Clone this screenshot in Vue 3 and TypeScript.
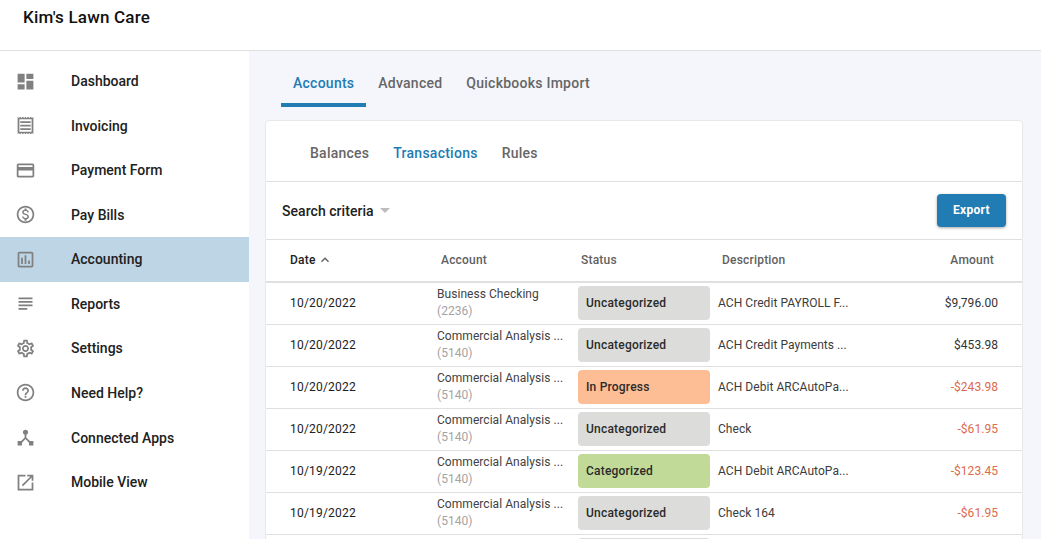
<script setup lang="ts">
interface Row {
  date: string
  account: string
  acctNo: string
  status: 'Uncategorized' | 'In Progress' | 'Categorized'
  description: string
  amount: string
}

const navItems = [
  { label: 'Dashboard', icon: 'M3 13h8V3H3v10zm0 8h8v-6H3v6zm10 0h8V11h-8v10zm0-18v6h8V3h-8z' },
  { label: 'Invoicing', icon: 'M19.5 3.5 18 2l-1.5 1.5L15 2l-1.5 1.5L12 2l-1.5 1.5L9 2 7.5 3.5 6 2 4.5 3.5 3 2v20l1.5-1.5L6 22l1.5-1.5L9 22l1.5-1.5L12 22l1.5-1.5L15 22l1.5-1.5L18 22l1.5-1.5L21 22V2l-1.5 1.5zM19 19.09H5V4.91h14v14.18zM6 15h12v2H6zm0-4h12v2H6zm0-4h12v2H6z' },
  { label: 'Payment Form', icon: 'M20 4H4c-1.11 0-1.99.89-1.99 2L2 18c0 1.11.89 2 2 2h16c1.11 0 2-.89 2-2V6c0-1.11-.89-2-2-2zm0 14H4v-6h16v6zm0-10H4V6h16v2z' },
  { label: 'Pay Bills', icon: 'M12 2C6.48 2 2 6.48 2 12s4.48 10 10 10 10-4.48 10-10S17.52 2 12 2zm0 18c-4.41 0-8-3.59-8-8s3.59-8 8-8 8 3.59 8 8-3.59 8-8 8zm.31-8.86c-1.77-.45-2.34-.94-2.34-1.67 0-.84.79-1.43 2.1-1.43 1.38 0 1.9.66 1.94 1.64h1.71c-.05-1.34-.87-2.57-2.49-2.97V5H10.9v1.69c-1.51.32-2.72 1.3-2.72 2.81 0 1.79 1.49 2.69 3.66 3.21 1.95.46 2.34 1.15 2.34 1.87 0 .53-.39 1.39-2.1 1.39-1.6 0-2.23-.72-2.32-1.64H8.04c.1 1.7 1.36 2.66 2.86 2.97V19h2.34v-1.67c1.52-.29 2.72-1.16 2.73-2.77-.01-2.2-1.9-2.96-3.66-3.42z' },
  { label: 'Accounting', icon: 'M19 3H5c-1.1 0-2 .9-2 2v14c0 1.1.9 2 2 2h14c1.1 0 2-.9 2-2V5c0-1.1-.9-2-2-2zm0 16H5V5h14v14zM7 10h2v7H7zm4-3h2v10h-2zm4 6h2v4h-2z', active: true },
  { label: 'Reports', icon: 'M14 17H4v2h10v-2zm6-8H4v2h16V9zM4 15h16v-2H4v2zM4 5v2h16V5H4z' },
  { label: 'Settings', icon: 'M19.43 12.98c.04-.32.07-.64.07-.98s-.03-.66-.07-.98l2.11-1.65c.19-.15.24-.42.12-.64l-2-3.46c-.12-.22-.39-.3-.61-.22l-2.49 1c-.52-.4-1.08-.73-1.69-.98l-.38-2.65C14.46 2.18 14.25 2 14 2h-4c-.25 0-.46.18-.49.42l-.38 2.65c-.61.25-1.17.59-1.69.98l-2.49-1c-.23-.09-.49 0-.61.22l-2 3.46c-.13.22-.07.49.12.64l2.11 1.65c-.04.32-.07.65-.07.98s.03.66.07.98l-2.11 1.65c-.19.15-.24.42-.12.64l2 3.46c.12.22.39.3.61.22l2.49-1c.52.4 1.08.73 1.69.98l.38 2.65c.03.24.24.42.49.42h4c.25 0 .46-.18.49-.42l.38-2.65c.61-.25 1.17-.59 1.69-.98l2.49 1c.23.09.49 0 .61-.22l2-3.46c.12-.22.07-.49-.12-.64l-2.11-1.65zm-1.98-1.71c.04.31.05.52.05.73 0 .21-.02.43-.05.73l-.14 1.13.89.7 1.08.84-.7 1.21-1.27-.51-1.04-.42-.9.68c-.43.32-.84.56-1.25.73l-1.06.43-.16 1.13-.2 1.35h-1.4l-.19-1.35-.16-1.13-1.06-.43c-.43-.18-.83-.41-1.23-.71l-.91-.7-1.06.43-1.27.51-.7-1.21 1.08-.84.89-.7-.14-1.13c-.03-.31-.05-.54-.05-.74s.02-.43.05-.73l.14-1.13-.89-.7-1.08-.84.7-1.21 1.27.51 1.04.42.9-.68c.43-.32.84-.56 1.25-.73l1.06-.43.16-1.13.2-1.35h1.39l.19 1.35.16 1.13 1.06.43c.43.18.83.41 1.23.71l.91.7 1.06-.43 1.27-.51.7 1.21-1.07.85-.89.7.14 1.13zM12 8c-2.21 0-4 1.79-4 4s1.79 4 4 4 4-1.79 4-4-1.79-4-4-4zm0 6c-1.1 0-2-.9-2-2s.9-2 2-2 2 .9 2 2-.9 2-2 2z' },
  { label: 'Need Help?', icon: 'M11 18h2v-2h-2v2zm1-16C6.48 2 2 6.48 2 12s4.48 10 10 10 10-4.48 10-10S17.52 2 12 2zm0 18c-4.41 0-8-3.59-8-8s3.59-8 8-8 8 3.59 8 8-3.59 8-8 8zm0-14c-2.21 0-4 1.79-4 4h2c0-1.1.9-2 2-2s2 .9 2 2c0 2-3 1.75-3 5h2c0-2.25 3-2.5 3-5 0-2.21-1.79-4-4-4z' },
  { label: 'Connected Apps', icon: 'M17 16l-4-4V8.82C14.16 8.4 15 7.3 15 6c0-1.66-1.34-3-3-3S9 4.34 9 6c0 1.3.84 2.4 2 2.82V12l-4 4H3v5h5v-3.05l4-4.2 4 4.2V21h5v-5h-4z' },
  { label: 'Mobile View', icon: 'M19 19H5V5h7V3H3v18h18v-9h-2v7zM14 3v2h3.59l-9.83 9.83 1.41 1.41L19 6.41V10h2V3h-7z' },
]

const rows: Row[] = [
  { date: '10/20/2022', account: 'Business Checking', acctNo: '(2236)', status: 'Uncategorized', description: 'ACH Credit PAYROLL F...', amount: '$9,796.00' },
  { date: '10/20/2022', account: 'Commercial Analysis ...', acctNo: '(5140)', status: 'Uncategorized', description: 'ACH Credit Payments ...', amount: '$453.98' },
  { date: '10/20/2022', account: 'Commercial Analysis ...', acctNo: '(5140)', status: 'In Progress', description: 'ACH Debit ARCAutoPa...', amount: '-$243.98' },
  { date: '10/20/2022', account: 'Commercial Analysis ...', acctNo: '(5140)', status: 'Uncategorized', description: 'Check', amount: '-$61.95' },
  { date: '10/19/2022', account: 'Commercial Analysis ...', acctNo: '(5140)', status: 'Categorized', description: 'ACH Debit ARCAutoPa...', amount: '-$123.45' },
  { date: '10/19/2022', account: 'Commercial Analysis ...', acctNo: '(5140)', status: 'Uncategorized', description: 'Check 164', amount: '-$61.95' },
]

function statusClass(status: Row['status']) {
  return 'status--' + status.toLowerCase().replace(' ', '-')
}
</script>

<template>
  <div class="page">
    <header class="topbar">Kim's Lawn Care</header>
    <div class="body">
      <nav class="sidebar">
        <a
          v-for="item in navItems"
          :key="item.label"
          class="nav-item"
          :class="{ 'nav-item--active': item.active }"
        >
          <svg class="nav-icon" viewBox="0 0 24 24" aria-hidden="true"><path :d="item.icon" /></svg>
          <span>{{ item.label }}</span>
        </a>
      </nav>
      <main class="main">
        <div class="tabs">
          <a class="tab tab--active">Accounts</a>
          <a class="tab">Advanced</a>
          <a class="tab">Quickbooks Import</a>
        </div>
        <section class="card">
          <div class="subtabs">
            <a class="subtab">Balances</a>
            <a class="subtab subtab--active">Transactions</a>
            <a class="subtab">Rules</a>
          </div>
          <div class="toolbar">
            <div class="criteria">
              Search criteria
              <span class="caret"></span>
            </div>
            <button class="export" type="button">Export</button>
          </div>
          <div class="row row--head">
            <div class="head-date">
              Date
              <svg class="sort" viewBox="0 0 24 24" aria-hidden="true"><path d="M7.41 15.41 12 10.83l4.59 4.58L18 14l-6-6-6 6z" /></svg>
            </div>
            <div class="head-account">Account</div>
            <div class="head-status">Status</div>
            <div class="head-desc">Description</div>
            <div class="head-amount">Amount</div>
          </div>
          <div v-for="(row, i) in rows" :key="i" class="row">
            <div class="date">{{ row.date }}</div>
            <div class="account">
              <div>{{ row.account }}</div>
              <div class="acct-no">{{ row.acctNo }}</div>
            </div>
            <div class="status" :class="statusClass(row.status)">{{ row.status }}</div>
            <div class="desc">{{ row.description }}</div>
            <div class="amount" :class="{ 'amount--neg': row.amount.startsWith('-') }">{{ row.amount }}</div>
          </div>
          <!-- next row is below the fold, only the top of its pill shows -->
          <div class="row">
            <div></div>
            <div></div>
            <div class="status status--uncategorized"></div>
          </div>
        </section>
      </main>
    </div>
  </div>
</template>

<style>
html,
body {
  height: 100%;
  overflow: hidden;
}
</style>

<style scoped>
.page {
  height: 539px;
  overflow: hidden;
  font-family: Roboto, "Liberation Sans", sans-serif;
  background: #fff;
  color: #1f1f1f;
}

.topbar {
  height: 50px;
  padding-left: 23px;
  border-bottom: 1px solid #e0e0e0;
  font-size: 17px;
  font-weight: 500;
  line-height: 35px;
  letter-spacing: 0.2px;
  color: #111;
}

.body {
  display: flex;
  height: 488px;
}

.sidebar {
  width: 249px;
  flex: none;
  padding-top: 7.9px;
  box-sizing: border-box;
  background: #fff;
}

.nav-item {
  display: flex;
  align-items: center;
  height: 44.55px;
  padding-left: 15px;
  font-size: 14px;
  font-weight: 500;
  color: #212121;
}

.nav-item--active {
  background: #bdd5e5;
}

.nav-icon {
  width: 21px;
  height: 21px;
  margin-right: 35px;
  fill: #808080;
  flex: none;
}

.main {
  flex: 1;
  min-width: 0;
  background: #f4f6fb;
  padding: 0 18px 0 16px;
}

.tabs {
  display: flex;
  height: 56px;
  margin-left: 16px;
}

.tab {
  display: flex;
  align-items: center;
  height: 56px;
  box-sizing: border-box;
  padding: 12px 12px 0;
  border-bottom: 4px solid transparent;
  font-size: 14px;
  font-weight: 500;
  letter-spacing: 0.25px;
  color: #666;
}

.tab--active {
  color: #217cb3;
  border-bottom-color: #217cb3;
}

.card {
  margin-top: 13px;
  background: #fff;
  border: 1px solid #e8e8e8;
  border-radius: 4px 4px 0 0;
}

.subtabs {
  display: flex;
  gap: 24px;
  align-items: center;
  height: 61px;
  padding-left: 44px;
  padding-top: 3px;
  box-sizing: border-box;
  border-bottom: 1px solid #e0e0e0;
}

.subtab {
  font-size: 14px;
  font-weight: 500;
  letter-spacing: 0.25px;
  color: #666;
}

.subtab--active {
  color: #217cb3;
}

.toolbar {
  display: flex;
  align-items: center;
  justify-content: space-between;
  height: 57px;
  padding: 0 16px;
  border-bottom: 1px solid #e0e0e0;
}

.criteria {
  display: flex;
  align-items: center;
  font-size: 14px;
  font-weight: 500;
  letter-spacing: 0.05px;
  color: #212121;
}

.caret {
  width: 0;
  height: 0;
  margin-left: 6px;
  border-left: 5px solid transparent;
  border-right: 5px solid transparent;
  border-top: 5px solid #bdbdbd;
}

.export {
  width: 69px;
  height: 33px;
  padding: 0 0 2px;
  border: 0;
  border-radius: 4px;
  background: #217cb3;
  color: #fff;
  font-family: inherit;
  font-size: 12px;
  font-weight: 700;
  letter-spacing: 0.3px;
  box-shadow: 0 1px 3px rgba(0, 0, 0, 0.35);
}

.row {
  display: grid;
  grid-template-columns: 171px 141px 140px 1fr 96px;
  align-items: center;
  height: 42px;
  padding-bottom: 1px;
  box-sizing: border-box;
  border-bottom: 1px solid #e0e0e0;
  font-size: 12px;
  color: #212121;
  letter-spacing: 0.05px;
}

.row--head {
  height: 43px;
  padding-bottom: 1px;
  border-bottom-width: 2px;
  font-weight: 500;
  color: #616161;
  letter-spacing: 0.2px;
}

.date,
.head-date {
  padding-left: 24px;
}

.date {
  letter-spacing: 0.2px;
}

.head-date {
  display: flex;
  align-items: center;
  color: #212121;
}

.sort {
  width: 16px;
  height: 16px;
  margin-left: 1px;
  fill: #616161;
}

.head-account,
.head-desc {
  padding-left: 4px;
}

.head-status {
  padding-left: 3px;
}

.head-amount {
  text-align: right;
  padding-right: 28px;
}

.account {
  line-height: 17px;
  color: #424242;
}

.acct-no {
  color: #a3a3a3;
}

.status {
  height: 34px;
  width: 132px;
  padding-left: 8px;
  box-sizing: border-box;
  border-radius: 4px;
  font-weight: 500;
  letter-spacing: 0.2px;
  line-height: 34px;
  color: #2b2b2b;
}

.status--uncategorized {
  background: #dcdcda;
}

.status--in-progress {
  background: #fdbd95;
}

.status--categorized {
  background: #c2da97;
}

.desc {
  color: #3c3c3c;
}

.amount {
  text-align: right;
  padding-right: 24px;
  color: #333;
}

.amount--neg {
  color: #dd6a4c;
}
</style>
